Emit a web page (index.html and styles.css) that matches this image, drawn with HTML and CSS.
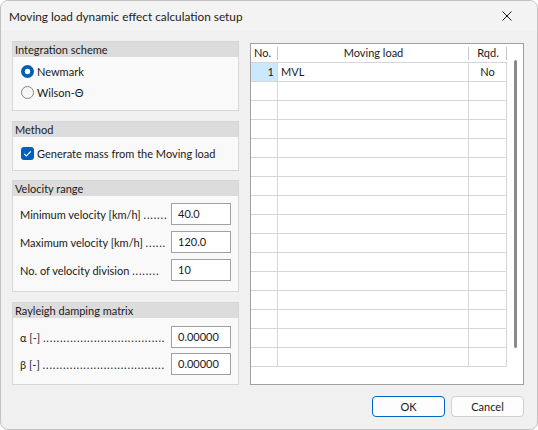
FILE: index.html
```html
<!DOCTYPE html>
<html>
<head>
<meta charset="utf-8">
<link rel="stylesheet" href="styles.css">
</head>
<body>
<div class="window">
  <div class="titlebar">
    <span class="title">Moving load dynamic effect calculation setup</span>
    <svg class="close" width="10" height="10" viewBox="0 0 10 10"><path d="M0.5 0.5 L9.5 9.5 M9.5 0.5 L0.5 9.5" stroke="#1b1b1b" stroke-width="1" fill="none"/></svg>
  </div>
  <div class="content">
    <div class="main">
      <div class="left">
        <div class="group g1">
          <div class="ghead">Integration scheme</div>
          <div class="gbody">
            <div class="opt"><span class="radio on"></span><span>Newmark</span></div>
            <div class="opt"><span class="radio"></span><span>Wilson-Θ</span></div>
          </div>
        </div>
        <div class="group g2">
          <div class="ghead">Method</div>
          <div class="gbody">
            <div class="opt"><span class="check"><svg width="13" height="13" viewBox="0 0 13 13"><path d="M3.2 6.8 L5.4 9 L9.8 4.3" stroke="#fff" stroke-width="1.2" fill="none"/></svg></span><span>Generate mass from the Moving load</span></div>
          </div>
        </div>
        <div class="group g3">
          <div class="ghead">Velocity range</div>
          <div class="gbody">
            <div class="field"><span class="lbl">Minimum velocity [km/h] <span class="dots">.......</span></span><span class="input">40.0</span></div>
            <div class="field"><span class="lbl">Maximum velocity [km/h] <span class="dots">......</span></span><span class="input">120.0</span></div>
            <div class="field"><span class="lbl">No. of velocity division <span class="dots">........</span></span><span class="input">10</span></div>
          </div>
        </div>
        <div class="group g4">
          <div class="ghead">Rayleigh damping matrix</div>
          <div class="gbody">
            <div class="field"><span class="lbl">α [-] <span class="dots">....................................</span></span><span class="input">0.00000</span></div>
            <div class="field"><span class="lbl">β [-] <span class="dots">....................................</span></span><span class="input">0.00000</span></div>
          </div>
        </div>
      </div>
      <div class="tablebox">
        <div class="grid">
          <div class="hrow">
            <div class="c cno"><span class="ht">No.</span></div>
            <div class="c cml center"><span class="ht">Moving load</span></div>
            <div class="c crq center"><span class="ht">Rqd.</span></div>
          </div>
          <div class="row">
            <div class="c cno sel right">1</div>
            <div class="c cml">MVL</div>
            <div class="c crq center">No</div>
          </div>
          <div class="row"><div class="c cno"></div><div class="c cml"></div><div class="c crq"></div></div>
          <div class="row"><div class="c cno"></div><div class="c cml"></div><div class="c crq"></div></div>
          <div class="row"><div class="c cno"></div><div class="c cml"></div><div class="c crq"></div></div>
          <div class="row"><div class="c cno"></div><div class="c cml"></div><div class="c crq"></div></div>
          <div class="row"><div class="c cno"></div><div class="c cml"></div><div class="c crq"></div></div>
          <div class="row"><div class="c cno"></div><div class="c cml"></div><div class="c crq"></div></div>
          <div class="row"><div class="c cno"></div><div class="c cml"></div><div class="c crq"></div></div>
          <div class="row"><div class="c cno"></div><div class="c cml"></div><div class="c crq"></div></div>
          <div class="row"><div class="c cno"></div><div class="c cml"></div><div class="c crq"></div></div>
          <div class="row"><div class="c cno"></div><div class="c cml"></div><div class="c crq"></div></div>
          <div class="row"><div class="c cno"></div><div class="c cml"></div><div class="c crq"></div></div>
          <div class="row"><div class="c cno"></div><div class="c cml"></div><div class="c crq"></div></div>
          <div class="row"><div class="c cno"></div><div class="c cml"></div><div class="c crq"></div></div>
          <div class="row"><div class="c cno"></div><div class="c cml"></div><div class="c crq"></div></div>
          <div class="row"><div class="c cno"></div><div class="c cml"></div><div class="c crq"></div></div>
        </div>
        <div class="vscroll"><div class="thumb"></div></div>
      </div>
    </div>
    <div class="buttons">
      <div class="btn primary">OK</div>
      <div class="btn">Cancel</div>
    </div>
  </div>
</div>
</body>
</html>
```
FILE: styles.css
```css
html, body {
  margin: 0;
  padding: 0;
  background: #ffffff;
}
body {
  font-family: Lato, "Noto Sans", sans-serif;
  font-size: 11px;
  color: #1a1a1a;
}
.window {
  width: 538px;
  height: 430px;
  box-sizing: border-box;
  border: 1px solid #c2c2c2;
  border-radius: 8px;
  background: #f0f0f0;
  overflow: hidden;
}
.titlebar {
  height: 30px;
  background: #f3f3f3;
  display: flex;
  align-items: center;
  justify-content: space-between;
  padding: 0 25px 0 8px;
}
.title {
  font-size: 11.8px;
  color: #1b1b1b;
}
.close {
  display: block;
}
.content {
  padding: 10px 13px 0 11px;
}
.main {
  display: flex;
  gap: 11px;
}
.left {
  width: 227px;
  display: flex;
  flex-direction: column;
}
.group {
  border: 1px solid #d7d7d7;
  background: #f9f9f9;
}
.g2 { margin-top: 10px; }
.g3 { margin-top: 9px; }
.g4 { margin-top: 10px; }
.ghead {
  height: 15px;
  line-height: 15px;
  background: #dcdcdc;
  padding-left: 2px;
  color: #1a1a1a;
}
.g1 .gbody { padding: 4px 7px 7px 8px; }
.g2 .gbody { padding: 6px 7px 6px 8px; }
.g3 .gbody { padding: 7px 7px 10px 7px; display: flex; flex-direction: column; gap: 6px; }
.g4 .gbody { padding: 8px 7px 9px 7px; display: flex; flex-direction: column; gap: 5px; }
.opt {
  height: 21px;
  display: flex;
  align-items: center;
  gap: 3px;
  white-space: nowrap;
}
.radio {
  width: 13px;
  height: 13px;
  box-sizing: border-box;
  border-radius: 50%;
  border: 1px solid #858585;
  background: #f6f6f6;
  flex: none;
}
.radio.on {
  border: none;
  background: radial-gradient(circle, #ffffff 0 2.6px, #005fb8 3.1px);
}
.check {
  width: 13px;
  height: 13px;
  border-radius: 3px;
  background: #005fb8;
  flex: none;
  display: block;
}
.check svg { display: block; }
.field {
  height: 22px;
  display: flex;
  align-items: center;
  justify-content: space-between;
}
.lbl {
  white-space: nowrap;
}
.dots {
  letter-spacing: 0.8px;
}
.input {
  width: 60px;
  height: 22px;
  box-sizing: border-box;
  border: 1px solid #a0a0a0;
  background: #ffffff;
  padding-left: 6px;
  line-height: 20px;
  flex: none;
}
.tablebox {
  margin-top: 2px;
  width: 274px;
  height: 342px;
  box-sizing: border-box;
  border: 1px solid #a0a0a0;
  background: #ffffff;
  display: flex;
  overflow: hidden;
}
.grid {
  width: 256px;
  flex: none;
}
.hrow, .row {
  display: flex;
  height: 19px;
  box-sizing: border-box;
  border-bottom: 1px solid #d6d6d6;
}
.c {
  box-sizing: border-box;
  line-height: 18px;
  white-space: nowrap;
  overflow: hidden;
  padding: 0 3px;
}
.cno { width: 27px; border-right: 1px solid #d6d6d6; }
.cml { width: 191px; border-right: 1px solid #d6d6d6; }
.crq { width: 38px; border-right: 1px solid #d6d6d6; }
.hrow .c { border-right: none; position: relative; }
.hrow .c::after {
  content: "";
  position: absolute;
  right: 0;
  top: 3px;
  bottom: 2px;
  width: 1px;
  background: #c8c8c8;
}
.sel { background: #cce8ff; }
.center { text-align: center; }
.right { text-align: right; }
.vscroll {
  flex: 1;
  position: relative;
}
.thumb {
  position: absolute;
  left: 7px;
  top: 16px;
  width: 3px;
  height: 288px;
  border-radius: 2px;
  background: #8a8a8a;
}
.buttons {
  display: flex;
  justify-content: flex-end;
  gap: 6px;
  margin-top: 11px;
}
.btn {
  width: 73px;
  height: 21px;
  box-sizing: border-box;
  border: 1px solid #d0d0d0;
  border-radius: 4px;
  background: #fdfdfd;
  text-align: center;
  line-height: 19px;
}
.btn.primary {
  border-color: #0067c0;
}
```
